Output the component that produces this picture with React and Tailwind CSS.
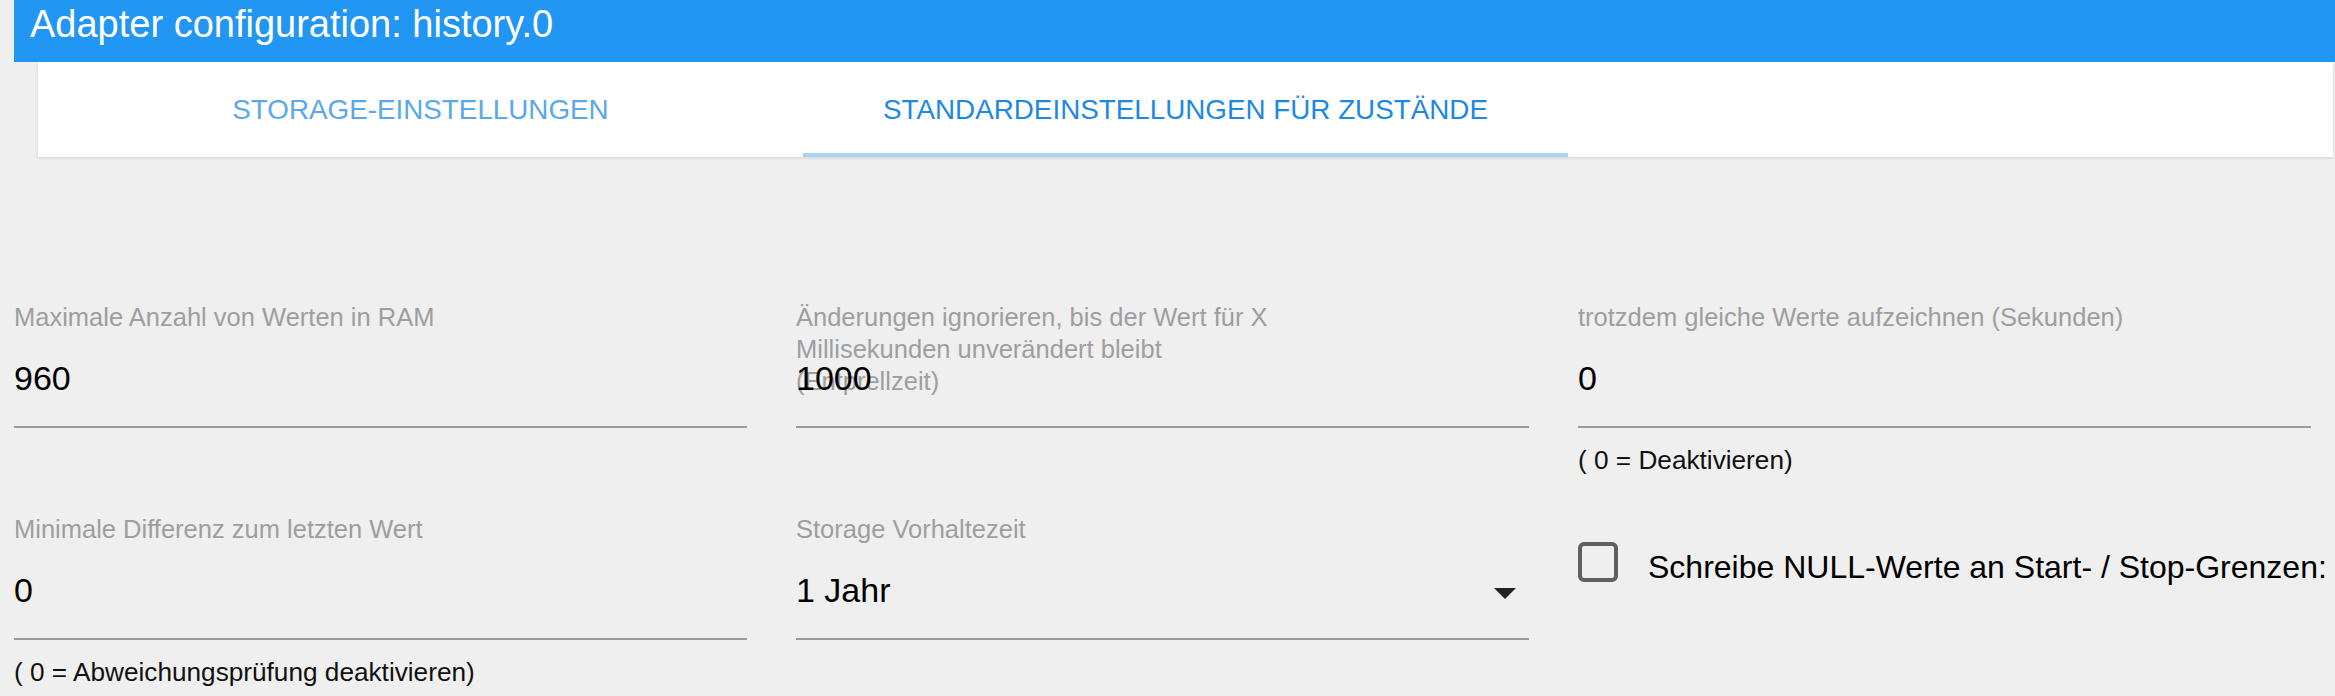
import React from 'react';

const Field = ({ label, value, helper, select }) => (
  <div className="relative">
    <div className="absolute left-0 top-0 text-[25.5px] leading-[32px] text-[#9e9e9e] whitespace-nowrap">
      {label}
    </div>
    <div className="pt-[57px] pb-[28px] border-b-2 border-[#9b9b9b]">
      <div className="relative flex h-[40px] items-center justify-between text-[34px] leading-[40px] text-black">
        <span>{value}</span>
        {select && (
          <svg width="22" height="11" viewBox="0 0 22 11" className="mr-[13px] mt-[6px]">
            <polygon points="0,0 22,0 11,11" fill="#222" />
          </svg>
        )}
      </div>
    </div>
    {helper && <div className="mt-[16px] text-[26.2px] leading-[32px] text-[#111]">{helper}</div>}
  </div>
);

const App = () => {
  return (
    <div className="min-h-screen bg-[#efefef] font-['Liberation_Sans',Arial,sans-serif]">
      <div className="ml-[14px] h-[62px] bg-[#2196f3] pl-[16px]">
        <div className="text-[38px] leading-[48px] text-white whitespace-nowrap">Adapter configuration: history.0</div>
      </div>

      <div className="ml-[38px] mr-[2px] flex h-[95px] bg-white shadow-[0_1px_3px_rgba(0,0,0,0.12)]">
        <div className="w-[765px] pt-[32px] text-center text-[27.8px] leading-[32px] text-[#5aa8e8]">
          STORAGE-EINSTELLUNGEN
        </div>
        <div className="w-[765px] border-b-4 border-[#a8d5f7] pt-[32px] text-center text-[27.8px] leading-[32px] text-[#1e88e5]">
          STANDARDEINSTELLUNGEN FÜR ZUSTÄNDE
        </div>
      </div>

      <div className="grid grid-cols-3 gap-x-[49px] gap-y-[37px] pl-[14px] pr-[24px] pt-[144px] items-start">
        <Field label="Maximale Anzahl von Werten in RAM" value="960" />
        <Field
          label={
            <>
              Änderungen ignorieren, bis der Wert für X
              <br />
              Millisekunden unverändert bleibt
              <br />
              (Entprellzeit)
            </>
          }
          value="1000"
        />
        <Field label="trotzdem gleiche Werte aufzeichnen (Sekunden)" value="0" helper="( 0 = Deaktivieren)" />

        <Field label="Minimale Differenz zum letzten Wert" value="0" helper="( 0 = Abweichungsprüfung deaktivieren)" />
        <Field label="Storage Vorhaltezeit" value="1 Jahr" select />
        <div className="flex items-start pt-[29px]">
          <svg width="40" height="40" viewBox="0 0 40 40" className="shrink-0">
            <rect x="2" y="2" width="36" height="36" rx="4" fill="none" stroke="#5f5f5f" strokeWidth="4" />
          </svg>
          <span className="ml-[30px] mt-[5px] whitespace-nowrap text-[32px] leading-[40px] text-black">
            Schreibe NULL-Werte an Start- / Stop-Grenzen:
          </span>
        </div>
      </div>
    </div>
  );
};

export default App;
